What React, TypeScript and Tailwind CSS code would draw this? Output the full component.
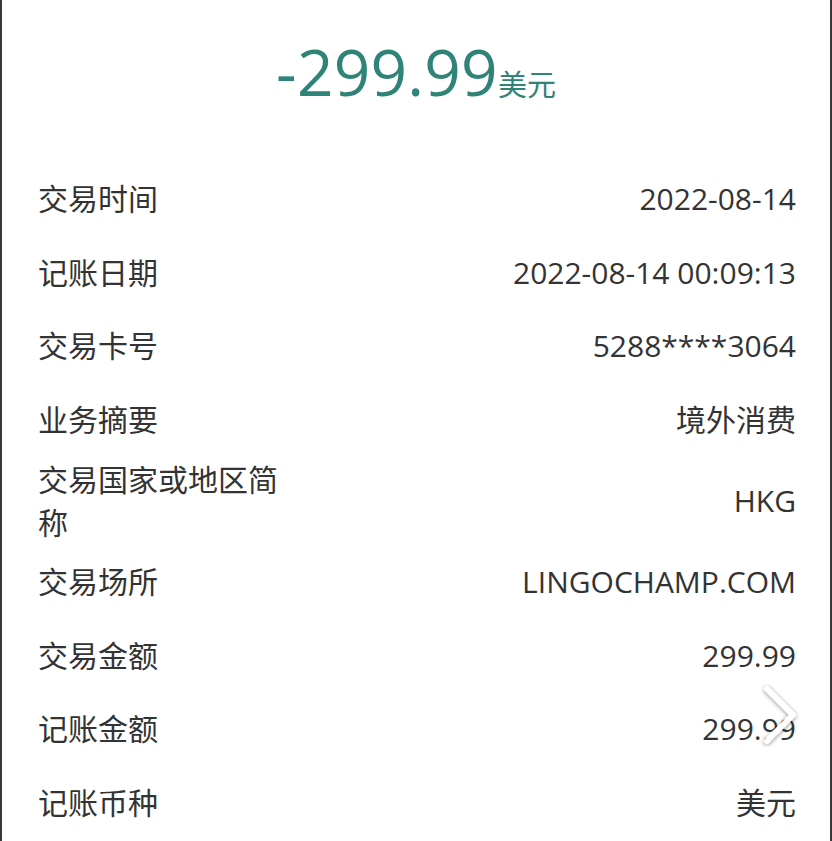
import React from 'react';

const rows: { label: string; value: string; tall?: boolean }[] = [
  { label: '交易时间', value: '2022-08-14' },
  { label: '记账日期', value: '2022-08-14 00:09:13' },
  { label: '交易卡号', value: '5288****3064' },
  { label: '业务摘要', value: '境外消费' },
  { label: '交易国家或地区简称', value: 'HKG', tall: true },
  { label: '交易场所', value: 'LINGOCHAMP.COM' },
  { label: '交易金额', value: '299.99' },
  { label: '记账金额', value: '299.99' },
  { label: '记账币种', value: '美元' },
];

const font = { fontFamily: '"Open Sans", "Noto Sans CJK SC", sans-serif' };

const App: React.FC = () => {
  return (
    <div className="w-[832px] h-[841px] overflow-hidden bg-white flex" style={font}>
      <div className="w-[2px] bg-[#3a3a3a]" />
      <div className="flex-1 flex flex-col relative">
        <div className="h-[162px] flex justify-center pt-[37px]">
          <div className="flex items-baseline text-[#2f8377]">
            <span className="text-[64px] leading-[70px] tracking-[0.2px] font-medium">-299.99</span>
            <span className="text-[29px]">美元</span>
          </div>
        </div>
        <div className="flex flex-col pl-[36px] pr-[34px] text-[#333333]">
          {rows.map((r) => (
            <div
              key={r.label}
              className={`flex items-center justify-between ${r.tall ? 'h-[89px]' : 'h-[73.5px]'}`}
            >
              <div className="w-[250px] text-[30px] leading-[43px]">{r.label}</div>
              <div className="text-[30px] leading-[43px]">{r.value}</div>
            </div>
          ))}
        </div>
        <div className="absolute left-[755px] top-[683px]">
          <svg width="46" height="64" viewBox="0 0 46 64">
            <defs>
              <filter id="sh" x="-50%" y="-50%" width="200%" height="200%">
                <feDropShadow dx="0" dy="1" stdDeviation="2" floodColor="#000" floodOpacity="0.45" />
              </filter>
            </defs>
            <path
              d="M10 6 L36 32 L10 58"
              fill="none"
              stroke="#ffffff"
              strokeWidth="6"
              strokeLinecap="round"
              strokeLinejoin="round"
              filter="url(#sh)"
            />
          </svg>
        </div>
      </div>
      <div className="w-[2px] bg-[#3a3a3a]" />
    </div>
  );
};

export default App;
